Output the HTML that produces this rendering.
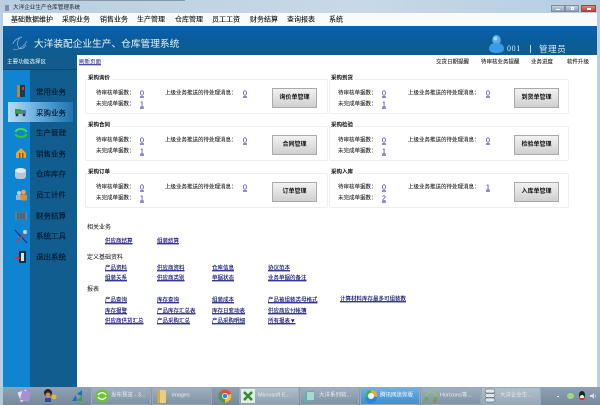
<!DOCTYPE html>
<html><head><meta charset="utf-8"><style>
html,body{margin:0;padding:0;width:600px;height:405px;overflow:hidden;background:#fff}
#r{position:relative;width:600px;height:405px;overflow:hidden;filter:blur(.2px);font-family:"Liberation Sans","Noto Sans CJK SC",sans-serif}
#r div,#r a,#r svg{position:absolute}
.t{white-space:nowrap;line-height:1;transform:translateY(-50%)}
.l{font-size:5.5px;color:#333;text-shadow:0 0 .3px #555}
.h{font-size:5.5px;color:#111;font-weight:bold}
.n{font-size:7px;color:#1a1a96;text-decoration:underline}
.a{font-size:5.5px;color:#14148c;text-decoration:underline;white-space:nowrap;line-height:1;transform:translateY(-50%);text-shadow:0 0 .3px #446}
.b{width:45px;height:20px;background:linear-gradient(#f2f2f2,#cfcfcf);border:.5px solid #aaa;box-sizing:border-box;font-size:6px;color:#111;font-weight:bold;text-align:center;line-height:19px}
.box{border:1px solid #eee;box-sizing:border-box;border-radius:2px}
.m{font-size:7px;color:#222;text-shadow:0 0 .3px #444}
.s{font-size:7.5px;color:#04182c;left:36px;text-shadow:0 0 .3px #04182c}
.k{font-size:5.5px;color:#e8eef3}
.tb{top:387px;height:18px;border-radius:2px;background:linear-gradient(#9fb0bf,#7f92a4);border:1px solid #9aa9b8;box-sizing:border-box}
</style></head><body><div id="r">
<div style="left:0;top:0;width:600px;height:13px;background:linear-gradient(90deg,#b9cfe2,#c8d8e6 60%,#b5cde2)"></div>
<div style="left:20px;top:0;width:165px;height:1px;background:#8a97a4"></div>
<div style="left:0;top:13px;width:3px;height:374px;background:#b9d0e4"></div>
<div style="left:597px;top:13px;width:3px;height:374px;background:#b9d0e4"></div>
<div style="left:3px;top:13px;width:594px;height:13px;background:#f9fafb"></div>
<div style="left:5px;top:5px;width:4px;height:6px;background:#8b8f95"></div>
<div class="t" style="left:13px;top:8.5px;font-size:5.6px;color:#222">大洋企业生产仓库管理系统</div>
<div style="left:551px;top:5px;width:14px;height:7px;background:linear-gradient(#c5d3e0,#8fa3b7);border:.5px solid #7b8ea2;box-sizing:border-box"></div>
<div style="left:565px;top:5px;width:14px;height:7px;background:linear-gradient(#c5d3e0,#8fa3b7);border:.5px solid #7b8ea2;box-sizing:border-box"></div>
<div style="left:581px;top:5px;width:15px;height:7px;background:linear-gradient(#e08a78,#c0402c);border:.5px solid #8f4a40;box-sizing:border-box"></div>
<div style="left:556px;top:9px;width:4px;height:1px;background:#fff"></div>
<div style="left:571px;top:7px;width:3px;height:3px;border:.5px solid #fff;box-sizing:border-box"></div>
<div style="left:587px;top:8px;width:4px;height:1.5px;background:#fff"></div>
<div class="t m" style="left:11px;top:19.5px">基础数据维护</div>
<div class="t m" style="left:62px;top:19.5px">采购业务</div>
<div class="t m" style="left:100px;top:19.5px">销售业务</div>
<div class="t m" style="left:137px;top:19.5px">生产管理</div>
<div class="t m" style="left:175px;top:19.5px">仓库管理</div>
<div class="t m" style="left:212px;top:19.5px">员工工资</div>
<div class="t m" style="left:250px;top:19.5px">财务结算</div>
<div class="t m" style="left:287px;top:19.5px">查询报表</div>
<div class="t m" style="left:329px;top:19.5px">系统</div>
<div style="left:3px;top:26px;width:594px;height:29px;background:linear-gradient(#0d62ad,#0a5c9e 40%,#0f5c8c)"></div>
<svg style="left:10px;top:35px" width="24" height="17" viewBox="0 0 24 17"><path d="M3 14C6 16 13 13 17 6M11 2C8 4 6 9 9 13C11 15 14 13 16 10M3 9C4 5 8 3 12 2" fill="none" stroke="#8fb6d4" stroke-width=".7"/></svg>
<div class="t" style="left:34px;top:44.5px;font-size:9.7px;color:#e8f2fa">大洋装配企业生产、仓库管理系统</div>
<svg style="left:489px;top:34px" width="15" height="20" viewBox="0 0 15 20"><ellipse cx="7.5" cy="6" rx="4.3" ry="5" fill="#58abe9"/><path d="M0 15C0 10 4 9 7.5 9S15 10 15 15C15 18 11 19 7.5 19S0 18 0 15Z" fill="#3d9be4"/><ellipse cx="6.5" cy="4.5" rx="2" ry="2" fill="#a5d4f5"/></svg>
<div class="t" style="left:507px;top:49px;font-size:8px;color:#dcebf6;font-family:'Liberation Serif',serif;letter-spacing:.6px">001</div>
<div style="left:530px;top:45px;width:1px;height:8px;background:#bcd5e8"></div>
<div class="t" style="left:539px;top:49px;font-size:8.5px;color:#dcebf6;letter-spacing:.6px">管理员</div>
<div style="left:3px;top:55px;width:74px;height:15px;background:#115c8d;border-bottom:1px solid #0c4a75;box-sizing:border-box"></div>
<div class="t" style="left:7px;top:63px;font-size:5.5px;color:#eef6fb;letter-spacing:.1px">主要功能选择区</div>
<div style="left:3px;top:70px;width:27px;height:317px;background:#0f84d0"></div>
<div style="left:30px;top:70px;width:47px;height:317px;background:#125d90"></div>
<div style="left:8px;top:102px;width:65px;height:20px;background:linear-gradient(90deg,#b6dcf4,#5ea8dc 50%,#1e73ae)"></div>
<div class="t s" style="top:92px">常用业务</div>
<div class="t s" style="top:112.5px">采购业务</div>
<div class="t s" style="top:133px">生产管理</div>
<div class="t s" style="top:153.5px">销售业务</div>
<div class="t s" style="top:174px">仓库库存</div>
<div class="t s" style="top:195px">员工计件</div>
<div class="t s" style="top:216px">财务结算</div>
<div class="t s" style="top:236px">系统工具</div>
<div class="t s" style="top:257px">退出系统</div>
<svg style="left:14px;top:84px" width="14" height="14" viewBox="0 0 14 14"><rect x="3" y="1" width="8" height="12" fill="#1d3b50"/><rect x="3" y="1" width="3" height="12" fill="#b08a42"/><rect x="8" y="3" width="2" height="3" fill="#d33"/></svg>
<svg style="left:14px;top:107px" width="14" height="10" viewBox="0 0 14 10"><rect x="1" y="2" width="6" height="5" fill="#3f9a4a"/><rect x="7" y="3" width="5" height="4" fill="#4c7fb0"/><circle cx="3" cy="8" r="1.4" fill="#333"/><circle cx="10" cy="8" r="1.4" fill="#333"/></svg>
<svg style="left:14px;top:126px" width="14" height="14" viewBox="0 0 14 14"><path d="M1.5 6C3 2 11 2 12.5 6" fill="none" stroke="#3fe03a" stroke-width="2"/><path d="M1.5 8C3 12 11 12 12.5 8" fill="none" stroke="#2fc92f" stroke-width="2"/></svg>
<svg style="left:15px;top:147px" width="12" height="12" viewBox="0 0 12 12"><path d="M1 11V6L6 1L11 6V11Z" fill="#e8a52a"/><rect x="4" y="6" width="1.5" height="5" fill="#8a5a10"/><rect x="7" y="6" width="1.5" height="5" fill="#8a5a10"/></svg>
<svg style="left:14px;top:167px" width="13" height="13" viewBox="0 0 13 13"><rect x="1" y="2" width="11" height="10" rx="3" fill="#b9c6d0"/><ellipse cx="6.5" cy="3.5" rx="5.5" ry="2.5" fill="#e3e9ee"/></svg>
<svg style="left:15px;top:189px" width="13" height="12" viewBox="0 0 13 12"><circle cx="4" cy="4" r="2" fill="#b9cfe0"/><rect x="1" y="6" width="6" height="5" fill="#9fb6c8"/><circle cx="8.5" cy="3" r="2.3" fill="#f2a14a"/><rect x="5.5" y="5.5" width="6.5" height="6" rx="1" fill="#ea8a2f"/></svg>
<svg style="left:15px;top:211px" width="12" height="10" viewBox="0 0 12 10"><rect x="0" y="1" width="12" height="8" fill="#5d7f98"/><path d="M2 3H10M2 5H10M2 7H10M3 1V9M6 1V9M9 1V9" stroke="#2f4a60" stroke-width=".6"/></svg>
<svg style="left:14px;top:229px" width="15" height="15" viewBox="0 0 15 15"><path d="M1 1L13 14" stroke="#1d2f8a" stroke-width="1.2"/><path d="M13 3L2 13" stroke="#d8392f" stroke-width="1.2"/><circle cx="11" cy="3" r="2" fill="#c5d3de"/></svg>
<svg style="left:14px;top:250px" width="13" height="14" viewBox="0 0 13 14"><rect x="5" y="1" width="7" height="12" fill="#12303f"/><rect x="7" y="3" width="3" height="8" fill="#d7e3ea"/><path d="M0 7.5H3V5.5L6.5 8L3 10.5V8.5H0Z" fill="#e52a22"/></svg>
<div class="t" style="left:79px;top:62.5px;font-size:5.5px;color:#14148c;text-decoration:underline">刷新页面</div>
<div class="t l" style="left:436px;top:62.5px">交货日期提醒</div>
<div class="t l" style="left:481px;top:62.5px">待审核业务提醒</div>
<div class="t l" style="left:531px;top:62.5px">业务进度</div>
<div class="t l" style="left:567px;top:62.5px">软件升级</div>
<div class="box" style="left:85px;top:79px;width:243px;height:35px"></div>
<div class="box" style="left:85px;top:126px;width:243px;height:35px"></div>
<div class="box" style="left:85px;top:173px;width:243px;height:35px"></div>
<div class="box" style="left:329px;top:79px;width:240px;height:35px"></div>
<div class="box" style="left:329px;top:126px;width:240px;height:35px"></div>
<div class="box" style="left:329px;top:173px;width:240px;height:35px"></div>
<div class="t h" style="left:88px;top:79px;background:#fff;padding-right:2px">采购询价</div>
<div class="t h" style="left:88px;top:126px;background:#fff;padding-right:2px">采购合同</div>
<div class="t h" style="left:88px;top:173px;background:#fff;padding-right:2px">采购订单</div>
<div class="t h" style="left:331px;top:79px;background:#fff;padding-right:2px">采购到货</div>
<div class="t h" style="left:331px;top:126px;background:#fff;padding-right:2px">采购检验</div>
<div class="t h" style="left:331px;top:173px;background:#fff;padding-right:2px">采购入库</div>
<div class="t l" style="left:96px;top:94px">待审核单据数：</div><div class="t n" style="left:140px;top:93.5px">0</div>
<div class="t l" style="left:165px;top:94px">上级业务推送的待处理消息：</div><div class="t n" style="left:243px;top:93.5px">0</div>
<div class="t l" style="left:96px;top:105px">未完成单据数：</div><div class="t n" style="left:140px;top:105px">1</div>
<div class="b" style="left:272px;top:88px">询价单管理</div>
<div class="t l" style="left:96px;top:141px">待审核单据数：</div><div class="t n" style="left:140px;top:140.5px">0</div>
<div class="t l" style="left:165px;top:141px">上级业务推送的待处理消息：</div><div class="t n" style="left:243px;top:140.5px">0</div>
<div class="t l" style="left:96px;top:152px">未完成单据数：</div><div class="t n" style="left:140px;top:152px">1</div>
<div class="b" style="left:272px;top:135px">合同管理</div>
<div class="t l" style="left:96px;top:188px">待审核单据数：</div><div class="t n" style="left:140px;top:187.5px">0</div>
<div class="t l" style="left:165px;top:188px">上级业务推送的待处理消息：</div><div class="t n" style="left:243px;top:187.5px">0</div>
<div class="t l" style="left:96px;top:199px">未完成单据数：</div><div class="t n" style="left:140px;top:199px">1</div>
<div class="b" style="left:272px;top:182px">订单管理</div>
<div class="t l" style="left:338px;top:94px">待审核单据数：</div><div class="t n" style="left:382px;top:93.5px">0</div>
<div class="t l" style="left:408px;top:94px">上级业务推送的待处理消息：</div><div class="t n" style="left:486px;top:93.5px">0</div>
<div class="t l" style="left:338px;top:105px">未完成单据数：</div><div class="t n" style="left:382px;top:105px">1</div>
<div class="b" style="left:514px;top:88px">到货单管理</div>
<div class="t l" style="left:338px;top:141px">待审核单据数：</div><div class="t n" style="left:382px;top:140.5px">0</div>
<div class="t l" style="left:408px;top:141px">上级业务推送的待处理消息：</div><div class="t n" style="left:486px;top:140.5px">0</div>
<div class="t l" style="left:338px;top:152px">未完成单据数：</div><div class="t n" style="left:382px;top:152px">1</div>
<div class="b" style="left:514px;top:135px">检验单管理</div>
<div class="t l" style="left:338px;top:188px">待审核单据数：</div><div class="t n" style="left:382px;top:187.5px">0</div>
<div class="t l" style="left:408px;top:188px">上级业务推送的待处理消息：</div><div class="t n" style="left:486px;top:187.5px">1</div>
<div class="t l" style="left:338px;top:199px">未完成单据数：</div><div class="t n" style="left:382px;top:199px">2</div>
<div class="b" style="left:514px;top:182px">入库单管理</div>
<div class="t" style="left:87px;top:228px;font-size:6px;color:#111">相关业务</div>
<a class="a" style="left:105px;top:241.5px">供应商结算</a><a class="a" style="left:157px;top:241.5px">组装结算</a>
<div class="t" style="left:87px;top:258px;font-size:6px;color:#111">定义基础资料</div>
<a class="a" style="left:105px;top:269px">产品资料</a><a class="a" style="left:157px;top:269px">供应商资料</a><a class="a" style="left:212px;top:269px">仓库信息</a><a class="a" style="left:268px;top:269px">协议范本</a>
<a class="a" style="left:105px;top:279px">组装关系</a><a class="a" style="left:157px;top:279px">供应商类别</a><a class="a" style="left:212px;top:279px">单据状态</a><a class="a" style="left:268px;top:279px">业务单据的备注</a>
<div class="t" style="left:87px;top:290px;font-size:6px;color:#111">报表</div>
<a class="a" style="left:105px;top:301px">产品查询</a><a class="a" style="left:157px;top:301px">库存查询</a><a class="a" style="left:212px;top:301px">组装成本</a><a class="a" style="left:268px;top:301px">产品被组装类母格式</a><a class="a" style="left:340px;top:299.5px">计算材料库存最多可组装数</a>
<a class="a" style="left:105px;top:311.5px">库存报警</a><a class="a" style="left:157px;top:311.5px">产品库存汇总表</a><a class="a" style="left:212px;top:311.5px">库存日变动表</a><a class="a" style="left:268px;top:311.5px">供应商应付帐簿</a>
<a class="a" style="left:105px;top:322px">供应商供货汇总</a><a class="a" style="left:157px;top:322px">产品采购汇总</a><a class="a" style="left:212px;top:322px">产品采购明细</a><a class="a" style="left:268px;top:322px">所有报表▼</a>
<div style="left:0;top:387px;width:600px;height:18px;background:linear-gradient(#8fa2b4,#75899c)"></div>
<div style="left:0;top:387px;width:3px;height:18px;background:#b4c7d6"></div>
<svg style="left:17px;top:388px" width="15" height="15" viewBox="0 0 15 15"><rect x="2" y="3" width="9" height="10" transform="rotate(-20 6 8)" fill="#e8e4f4"/><rect x="4" y="3" width="9" height="10" transform="rotate(15 8 8)" fill="#a78fd0"/></svg>
<svg style="left:42px;top:388px" width="16" height="15" viewBox="0 0 16 15"><circle cx="6" cy="5" r="4" fill="#2c2320"/><circle cx="6" cy="7" r="2.5" fill="#c58d5c"/><rect x="3" y="10" width="6" height="4" fill="#2b4fa0"/><circle cx="12" cy="9" r="2.5" fill="#e2b838"/></svg>
<svg style="left:70px;top:388px" width="14" height="15" viewBox="0 0 14 15"><path d="M2 13L6 7L7 13ZM7 6L12 2V8Z" fill="#1d6fb8"/><path d="M6 13L12 8V13Z" fill="#38a24a"/></svg>
<div class="tb" style="left:91px;width:60px"></div>
<svg style="left:95px;top:389px" width="14" height="14" viewBox="0 0 14 14"><circle cx="7" cy="7" r="6.5" fill="#6ec531"/><path d="M3 6C5 3 9 3 11 6M3 8C5 11 9 11 11 8" stroke="#fff" stroke-width="1.3" fill="none"/></svg>
<div class="t k" style="left:111px;top:396px">发布预览 - 3...</div>
<div class="tb" style="left:152px;width:60px"></div>
<svg style="left:156px;top:389px" width="11" height="15" viewBox="0 0 11 15"><rect x="1" y="1" width="9" height="13" rx="1" fill="#e9cf7f"/><rect x="1" y="1" width="3" height="13" fill="#cfa94a"/></svg>
<div class="t k" style="left:172px;top:396px">images</div>
<svg style="left:218px;top:389px" width="14" height="14" viewBox="0 0 14 14"><circle cx="7" cy="7" r="6.5" fill="#e0503d"/><path d="M7 7L1.5 3.5A6.5 6.5 0 0 0 7 13.5Z" fill="#3ea14a"/><path d="M7 7V13.5A6.5 6.5 0 0 0 13 5Z" fill="#f0c22c"/><circle cx="7" cy="7" r="3" fill="#fff"/><circle cx="7" cy="7" r="2.3" fill="#3f7de0"/></svg>
<div class="tb" style="left:239px;width:60px;background:linear-gradient(#b1bfcb,#8d9fb0)"></div>
<svg style="left:241px;top:389px" width="14" height="14" viewBox="0 0 14 14"><rect width="14" height="14" fill="#e4ece2"/><path d="M3 3L11 11M11 3L3 11" stroke="#2a8c3a" stroke-width="2.5"/></svg>
<div class="t k" style="left:258px;top:396px">Microsoft E...</div>
<div class="tb" style="left:300px;width:59px"></div>
<svg style="left:303px;top:389px" width="13" height="14" viewBox="0 0 13 14"><path d="M2 3L11 1V11L2 13Z" fill="#5fb3ad"/><path d="M4 3H11V11H4Z" fill="#a7d8d6"/></svg>
<div class="t k" style="left:319px;top:396px">大洋系列软...</div>
<div class="tb" style="left:360px;width:60px;background:linear-gradient(#6fb0e2,#3f8fcf)"></div>
<svg style="left:364px;top:389px" width="14" height="14" viewBox="0 0 14 14"><circle cx="7" cy="7" r="6" fill="#fff"/><path d="M7 1A6 6 0 0 1 13 8L7 7Z" fill="#f2a52c"/><path d="M1 8A6 6 0 0 0 13 8L7 7Z" fill="#2a86d8"/><path d="M1 8A6 6 0 0 1 7 1L7 7Z" fill="#43b24c"/><circle cx="7" cy="7" r="3" fill="#fff"/></svg>
<div class="t k" style="left:380px;top:396px;color:#f5f9fc">腾讯网迷你版</div>
<div class="tb" style="left:421px;width:60px"></div>
<svg style="left:424px;top:389px" width="14" height="14" viewBox="0 0 14 14"><path d="M2 9C2 1 12 1 12 9" fill="none" stroke="#7ed05c" stroke-width="1.2"/><rect x="1" y="8" width="3" height="4" fill="#5fb13f"/><rect x="10" y="8" width="3" height="4" fill="#5fb13f"/><circle cx="10" cy="12" r="1" fill="#e2642a"/></svg>
<div class="t k" style="left:440px;top:396px">Horizons等...</div>
<div class="tb" style="left:481px;width:60px;background:linear-gradient(#b1bfcb,#97a8b8)"></div>
<svg style="left:484px;top:388px" width="13" height="15" viewBox="0 0 13 15"><rect x="1" y="1" width="10" height="4" rx="2" fill="#dfe6ec" stroke="#44535f" stroke-width=".5"/><rect x="1" y="5.5" width="10" height="4" rx="2" fill="#dfe6ec" stroke="#44535f" stroke-width=".5"/><rect x="1" y="10" width="10" height="4" rx="2" fill="#dfe6ec" stroke="#44535f" stroke-width=".5"/></svg>
<div class="t k" style="left:500px;top:396px">大洋企业生...</div>
<div style="left:557px;top:396px;width:2px;height:1px;background:#eee"></div>
<div style="left:567px;top:393px;width:7px;height:6px;border-radius:50%;background:#9fdc7a"></div>
<svg style="left:578px;top:391px" width="8" height="10" viewBox="0 0 8 10"><ellipse cx="4" cy="4" rx="3" ry="4" fill="#222"/><ellipse cx="4" cy="6" rx="2" ry="2" fill="#eee"/><path d="M1 7H7L6 9H2Z" fill="#d8352a"/></svg>
<svg style="left:590px;top:392px" width="8" height="8" viewBox="0 0 8 8"><path d="M0 3H2L4 1V7L2 5H0Z" fill="#dde"/><path d="M5 2.5A2.5 2.5 0 0 1 5 5.5" stroke="#dde" stroke-width=".6" fill="none"/></svg>
</div></body></html>
